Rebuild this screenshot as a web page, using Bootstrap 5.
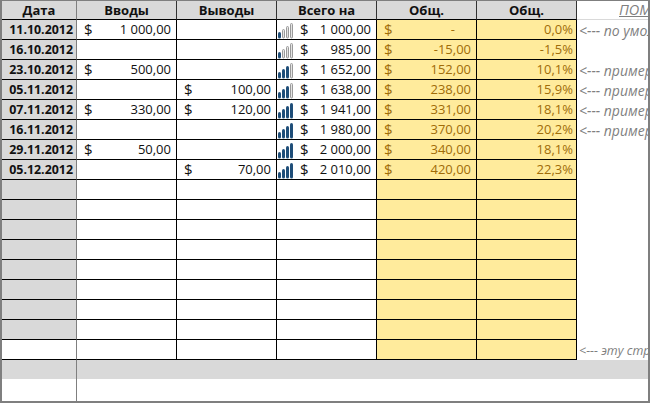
<!DOCTYPE html>
<html lang="ru">
<head>
<meta charset="utf-8">
<title>Таблица</title>
<link href="https://cdn.jsdelivr.net/npm/bootstrap@5.3.0/dist/css/bootstrap.min.css" rel="stylesheet">
<style>
html,body{margin:0;height:403px;overflow:hidden;background:#fff}
.sheet-frame{width:650px;height:403px;border:solid #7f7f7f;border-width:1px 2px 2px 2px;overflow:hidden;background:#fff}
.sheet{width:646px;table-layout:fixed;border-collapse:separate;border-spacing:0;margin:0;font-family:"Open Sans","Liberation Sans",sans-serif;font-size:13px;color:#111}
.sheet td,.sheet th{padding:0;border:0;border-right:1px solid #000;border-bottom:1px solid #000;height:20px;line-height:19px;white-space:nowrap;overflow:hidden;vertical-align:middle;background:#fff;box-shadow:none}
.sheet thead th{height:19px;background:#d9d9d9;text-align:center;font-weight:700;line-height:18px;border-right-color:#333}
.sheet .c-date{border-right-color:#7f7f7f;background:#d9d9d9;font-weight:700;text-align:right;padding-right:3px;font-size:12.4px}
.sheet thead .c-date{text-align:center;padding-right:0;font-size:13px}
.sheet .c-date.plain{background:#fff}
.sheet .c-warm{background:#ffeb9c;color:#a06c08}
.sheet .c-pct{text-align:right;padding-right:3px}
.sheet .c-note{border:0;background:#fff;color:#7f7f7f;font-style:italic;padding-left:2px;font-size:14px}
.sheet thead .c-note{background:#fff;border-bottom:1px solid #d9d9d9;text-align:left;padding-left:42px;font-weight:400;text-decoration:underline;color:#7f7f7f;font-size:14.5px}
.sheet .c-note.tiny{font-size:12.5px}
.money{padding:0 5px 0 7px}
.money>span:first-of-type{font-size:15px}
.money.with-spark{padding-left:0}
.spark{width:17px;height:18px;margin-right:6px;flex:none}
.band td{height:19px;background:#d9d9d9;border-right:0;border-bottom:0}
.tail td{height:22px;background:#fff;border-right:0;border-bottom:0}
.band .c-first,.tail .c-first{border-right:1px solid #7f7f7f}
</style>
</head>
<body>
<svg width="0" height="0" class="position-absolute">
<defs>
<symbol id="s1" viewBox="0 0 17 18"><rect x="1" y="11" width="3" height="6.5" rx="1.5" fill="#1f4e79"/><rect x="5.5" y="8.5" width="2" height="8.5" rx="1" fill="#e4e4e4" stroke="#9a9a9a"/><rect x="9.5" y="5.5" width="2" height="11.5" rx="1" fill="#e4e4e4" stroke="#9a9a9a"/><rect x="13.5" y="2.5" width="2" height="14.5" rx="1" fill="#e4e4e4" stroke="#9a9a9a"/></symbol>
<symbol id="s3" viewBox="0 0 17 18"><rect x="1" y="11" width="3" height="6.5" rx="1.5" fill="#1f4e79"/><rect x="5" y="8" width="3" height="9.5" rx="1.5" fill="#1f4e79"/><rect x="9" y="5" width="3" height="12.5" rx="1.5" fill="#1f4e79"/><rect x="13.5" y="2.5" width="2" height="14.5" rx="1" fill="#e4e4e4" stroke="#9a9a9a"/></symbol>
<symbol id="s4" viewBox="0 0 17 18"><rect x="1" y="11" width="3" height="6.5" rx="1.5" fill="#1f4e79"/><rect x="5" y="8" width="3" height="9.5" rx="1.5" fill="#1f4e79"/><rect x="9" y="5" width="3" height="12.5" rx="1.5" fill="#1f4e79"/><rect x="13" y="2" width="3" height="15.5" rx="1.5" fill="#1f4e79"/></symbol>
</defs>
</svg>
<div class="sheet-frame">
<table class="table sheet">
<colgroup><col style="width:75px"><col style="width:100px"><col style="width:100px"><col style="width:100px"><col style="width:100px"><col style="width:100px"><col style="width:71px"></colgroup>
<thead><tr><th class="c-date c-head">Дата</th><th>Вводы</th><th>Выводы</th><th>Всего на</th><th>Общ.</th><th>Общ.</th><th class="c-note">ПОМОЩЬ</th></tr></thead>
<tbody>
<tr><td class="c-date">11.10.2012</td><td><div class="d-flex justify-content-between money"><span>$</span><span>1 000,00</span></div></td><td></td><td><div class="d-flex align-items-center money with-spark"><svg class="spark"><use href="#s1"/></svg><span>$</span><span class="ms-auto">1 000,00</span></div></td><td class="c-warm"><div class="d-flex justify-content-between money"><span>$</span><span class="pe-3">-</span></div></td><td class="c-warm c-pct">0,0%</td><td class="c-note">&lt;--- по умолчанию</td></tr>
<tr><td class="c-date">16.10.2012</td><td></td><td></td><td><div class="d-flex align-items-center money with-spark"><svg class="spark"><use href="#s1"/></svg><span>$</span><span class="ms-auto">985,00</span></div></td><td class="c-warm"><div class="d-flex justify-content-between money"><span>$</span><span>-15,00</span></div></td><td class="c-warm c-pct">-1,5%</td><td class="c-note"></td></tr>
<tr><td class="c-date">23.10.2012</td><td><div class="d-flex justify-content-between money"><span>$</span><span>500,00</span></div></td><td></td><td><div class="d-flex align-items-center money with-spark"><svg class="spark"><use href="#s3"/></svg><span>$</span><span class="ms-auto">1 652,00</span></div></td><td class="c-warm"><div class="d-flex justify-content-between money"><span>$</span><span>152,00</span></div></td><td class="c-warm c-pct">10,1%</td><td class="c-note">&lt;--- пример</td></tr>
<tr><td class="c-date">05.11.2012</td><td></td><td><div class="d-flex justify-content-between money"><span>$</span><span>100,00</span></div></td><td><div class="d-flex align-items-center money with-spark"><svg class="spark"><use href="#s3"/></svg><span>$</span><span class="ms-auto">1 638,00</span></div></td><td class="c-warm"><div class="d-flex justify-content-between money"><span>$</span><span>238,00</span></div></td><td class="c-warm c-pct">15,9%</td><td class="c-note">&lt;--- пример</td></tr>
<tr><td class="c-date">07.11.2012</td><td><div class="d-flex justify-content-between money"><span>$</span><span>330,00</span></div></td><td><div class="d-flex justify-content-between money"><span>$</span><span>120,00</span></div></td><td><div class="d-flex align-items-center money with-spark"><svg class="spark"><use href="#s4"/></svg><span>$</span><span class="ms-auto">1 941,00</span></div></td><td class="c-warm"><div class="d-flex justify-content-between money"><span>$</span><span>331,00</span></div></td><td class="c-warm c-pct">18,1%</td><td class="c-note">&lt;--- пример</td></tr>
<tr><td class="c-date">16.11.2012</td><td></td><td></td><td><div class="d-flex align-items-center money with-spark"><svg class="spark"><use href="#s4"/></svg><span>$</span><span class="ms-auto">1 980,00</span></div></td><td class="c-warm"><div class="d-flex justify-content-between money"><span>$</span><span>370,00</span></div></td><td class="c-warm c-pct">20,2%</td><td class="c-note">&lt;--- пример</td></tr>
<tr><td class="c-date">29.11.2012</td><td><div class="d-flex justify-content-between money"><span>$</span><span>50,00</span></div></td><td></td><td><div class="d-flex align-items-center money with-spark"><svg class="spark"><use href="#s4"/></svg><span>$</span><span class="ms-auto">2 000,00</span></div></td><td class="c-warm"><div class="d-flex justify-content-between money"><span>$</span><span>340,00</span></div></td><td class="c-warm c-pct">18,1%</td><td class="c-note"></td></tr>
<tr><td class="c-date">05.12.2012</td><td></td><td><div class="d-flex justify-content-between money"><span>$</span><span>70,00</span></div></td><td><div class="d-flex align-items-center money with-spark"><svg class="spark"><use href="#s4"/></svg><span>$</span><span class="ms-auto">2 010,00</span></div></td><td class="c-warm"><div class="d-flex justify-content-between money"><span>$</span><span>420,00</span></div></td><td class="c-warm c-pct">22,3%</td><td class="c-note"></td></tr>
<tr><td class="c-date"></td><td></td><td></td><td></td><td class="c-warm"></td><td class="c-warm"></td><td class="c-note"></td></tr>
<tr><td class="c-date"></td><td></td><td></td><td></td><td class="c-warm"></td><td class="c-warm"></td><td class="c-note"></td></tr>
<tr><td class="c-date"></td><td></td><td></td><td></td><td class="c-warm"></td><td class="c-warm"></td><td class="c-note"></td></tr>
<tr><td class="c-date"></td><td></td><td></td><td></td><td class="c-warm"></td><td class="c-warm"></td><td class="c-note"></td></tr>
<tr><td class="c-date"></td><td></td><td></td><td></td><td class="c-warm"></td><td class="c-warm"></td><td class="c-note"></td></tr>
<tr><td class="c-date"></td><td></td><td></td><td></td><td class="c-warm"></td><td class="c-warm"></td><td class="c-note"></td></tr>
<tr><td class="c-date"></td><td></td><td></td><td></td><td class="c-warm"></td><td class="c-warm"></td><td class="c-note"></td></tr>
<tr><td class="c-date"></td><td></td><td></td><td></td><td class="c-warm"></td><td class="c-warm"></td><td class="c-note"></td></tr>
<tr><td class="c-date plain"></td><td></td><td></td><td></td><td class="c-warm"></td><td class="c-warm"></td><td class="c-note tiny">&lt;--- эту строку</td></tr>
<tr class="band"><td class="c-first"></td><td colspan="6"></td></tr>
<tr class="tail"><td class="c-first"></td><td colspan="6"></td></tr>
</tbody>
</table>
</div>
</body>
</html>
